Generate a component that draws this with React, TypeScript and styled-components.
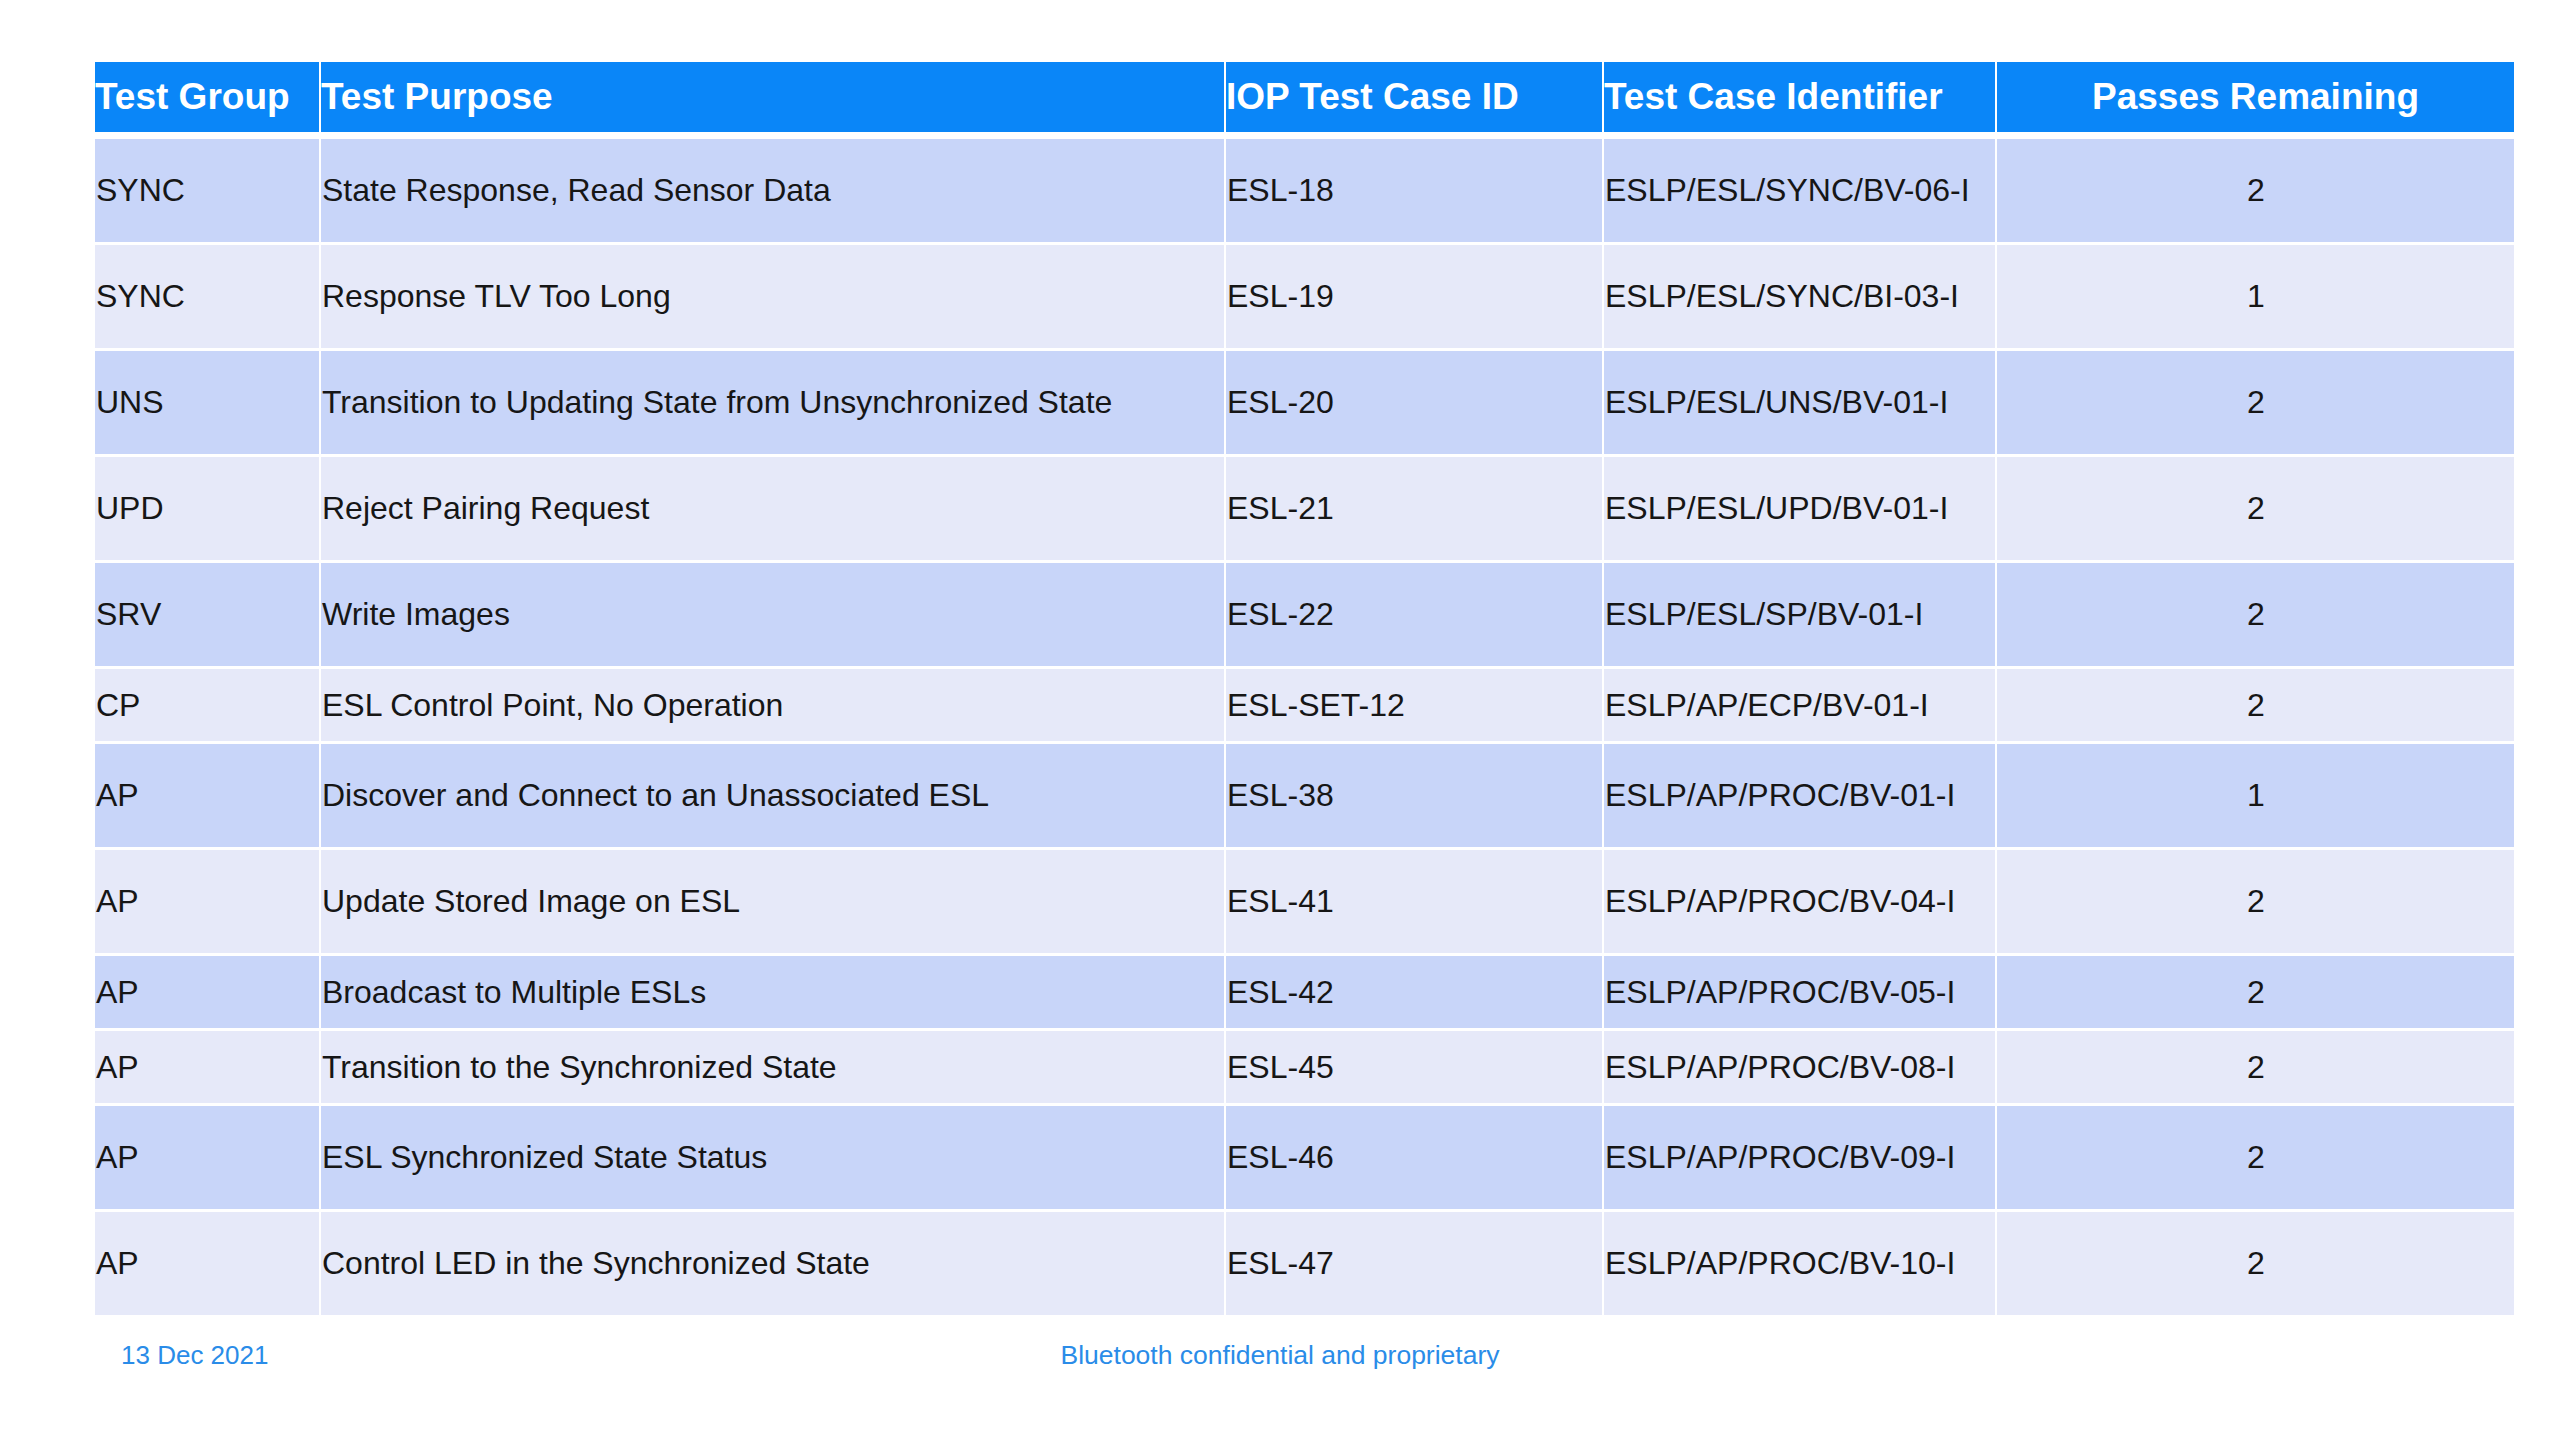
import React from "react";
import styled, { createGlobalStyle } from "styled-components";

const GlobalStyle = createGlobalStyle`
  html, body {
    margin: 0;
    padding: 0;
    background: #ffffff;
  }
  body {
    font-family: "Liberation Sans", Arial, Helvetica, sans-serif;
  }
`;

const Page = styled.div`
  width: 2560px;
  height: 1440px;
  box-sizing: border-box;
  padding-top: 62px;
  background: #ffffff;
  display: flex;
  flex-direction: column;
`;

const Table = styled.div`
  margin-left: 95px;
  width: 2419px;
  display: flex;
  flex-direction: column;
  gap: 3px;
`;

const COLS = "224px 903px 376px 391px 517px";

const HeaderRow = styled.div`
  display: grid;
  grid-template-columns: ${COLS};
  column-gap: 2px;
  height: 70px;
  margin-bottom: 4px;
`;

const HeaderCell = styled.div<{ $center?: boolean }>`
  background: #0a86f8;
  color: #ffffff;
  font-size: 37px;
  font-weight: 700;
  display: flex;
  align-items: center;
  justify-content: ${(p) => (p.$center ? "center" : "flex-start")};
  white-space: nowrap;
`;

const Row = styled.div<{ $tall: boolean }>`
  display: grid;
  grid-template-columns: ${COLS};
  column-gap: 2px;
  height: ${(p) => (p.$tall ? "103px" : "72px")};
`;

const Cell = styled.div<{ $shade: boolean; $center?: boolean }>`
  background: ${(p) => (p.$shade ? "#c8d5f9" : "#e6e9f9")};
  color: #161616;
  font-size: 32px;
  padding-left: 1px;
  display: flex;
  align-items: center;
  justify-content: ${(p) => (p.$center ? "center" : "flex-start")};
  white-space: nowrap;
`;

const Footer = styled.div`
  display: grid;
  grid-template-columns: 1fr auto 1fr;
  align-items: center;
  margin-top: 24px;
  height: 32px;
`;

const DateText = styled.div`
  padding-left: 121px;
  color: #2a8ce8;
  font-size: 26px;
`;

const Confidential = styled.div`
  color: #2a8ce8;
  font-size: 26.5px;
`;

type RowData = {
  group: string;
  purpose: string;
  iop: string;
  ident: string;
  passes: string;
  tall: boolean;
};

const rows: RowData[] = [
  { group: "SYNC", purpose: "State Response, Read Sensor Data", iop: "ESL-18", ident: "ESLP/ESL/SYNC/BV-06-I", passes: "2", tall: true },
  { group: "SYNC", purpose: "Response TLV Too Long", iop: "ESL-19", ident: "ESLP/ESL/SYNC/BI-03-I", passes: "1", tall: true },
  { group: "UNS", purpose: "Transition to Updating State from Unsynchronized State", iop: "ESL-20", ident: "ESLP/ESL/UNS/BV-01-I", passes: "2", tall: true },
  { group: "UPD", purpose: "Reject Pairing Request", iop: "ESL-21", ident: "ESLP/ESL/UPD/BV-01-I", passes: "2", tall: true },
  { group: "SRV", purpose: "Write Images", iop: "ESL-22", ident: "ESLP/ESL/SP/BV-01-I", passes: "2", tall: true },
  { group: "CP", purpose: "ESL Control Point, No Operation", iop: "ESL-SET-12", ident: "ESLP/AP/ECP/BV-01-I", passes: "2", tall: false },
  { group: "AP", purpose: "Discover and Connect to an Unassociated ESL", iop: "ESL-38", ident: "ESLP/AP/PROC/BV-01-I", passes: "1", tall: true },
  { group: "AP", purpose: "Update Stored Image on ESL", iop: "ESL-41", ident: "ESLP/AP/PROC/BV-04-I", passes: "2", tall: true },
  { group: "AP", purpose: "Broadcast to Multiple ESLs", iop: "ESL-42", ident: "ESLP/AP/PROC/BV-05-I", passes: "2", tall: false },
  { group: "AP", purpose: "Transition to the Synchronized State", iop: "ESL-45", ident: "ESLP/AP/PROC/BV-08-I", passes: "2", tall: false },
  { group: "AP", purpose: "ESL Synchronized State Status", iop: "ESL-46", ident: "ESLP/AP/PROC/BV-09-I", passes: "2", tall: true },
  { group: "AP", purpose: "Control LED in the Synchronized State", iop: "ESL-47", ident: "ESLP/AP/PROC/BV-10-I", passes: "2", tall: true },
];

export default function App() {
  return (
    <>
      <GlobalStyle />
      <Page>
        <Table>
          <HeaderRow>
            <HeaderCell>Test Group</HeaderCell>
            <HeaderCell>Test Purpose</HeaderCell>
            <HeaderCell>IOP Test Case ID</HeaderCell>
            <HeaderCell>Test Case Identifier</HeaderCell>
            <HeaderCell $center>Passes Remaining</HeaderCell>
          </HeaderRow>
          {rows.map((r, i) => {
            const shade = i % 2 === 0;
            return (
              <Row key={i} $tall={r.tall}>
                <Cell $shade={shade}>{r.group}</Cell>
                <Cell $shade={shade}>{r.purpose}</Cell>
                <Cell $shade={shade}>{r.iop}</Cell>
                <Cell $shade={shade}>{r.ident}</Cell>
                <Cell $shade={shade} $center>
                  {r.passes}
                </Cell>
              </Row>
            );
          })}
        </Table>
        <Footer>
          <DateText>13 Dec 2021</DateText>
          <Confidential>Bluetooth confidential and proprietary</Confidential>
          <div />
        </Footer>
      </Page>
    </>
  );
}
